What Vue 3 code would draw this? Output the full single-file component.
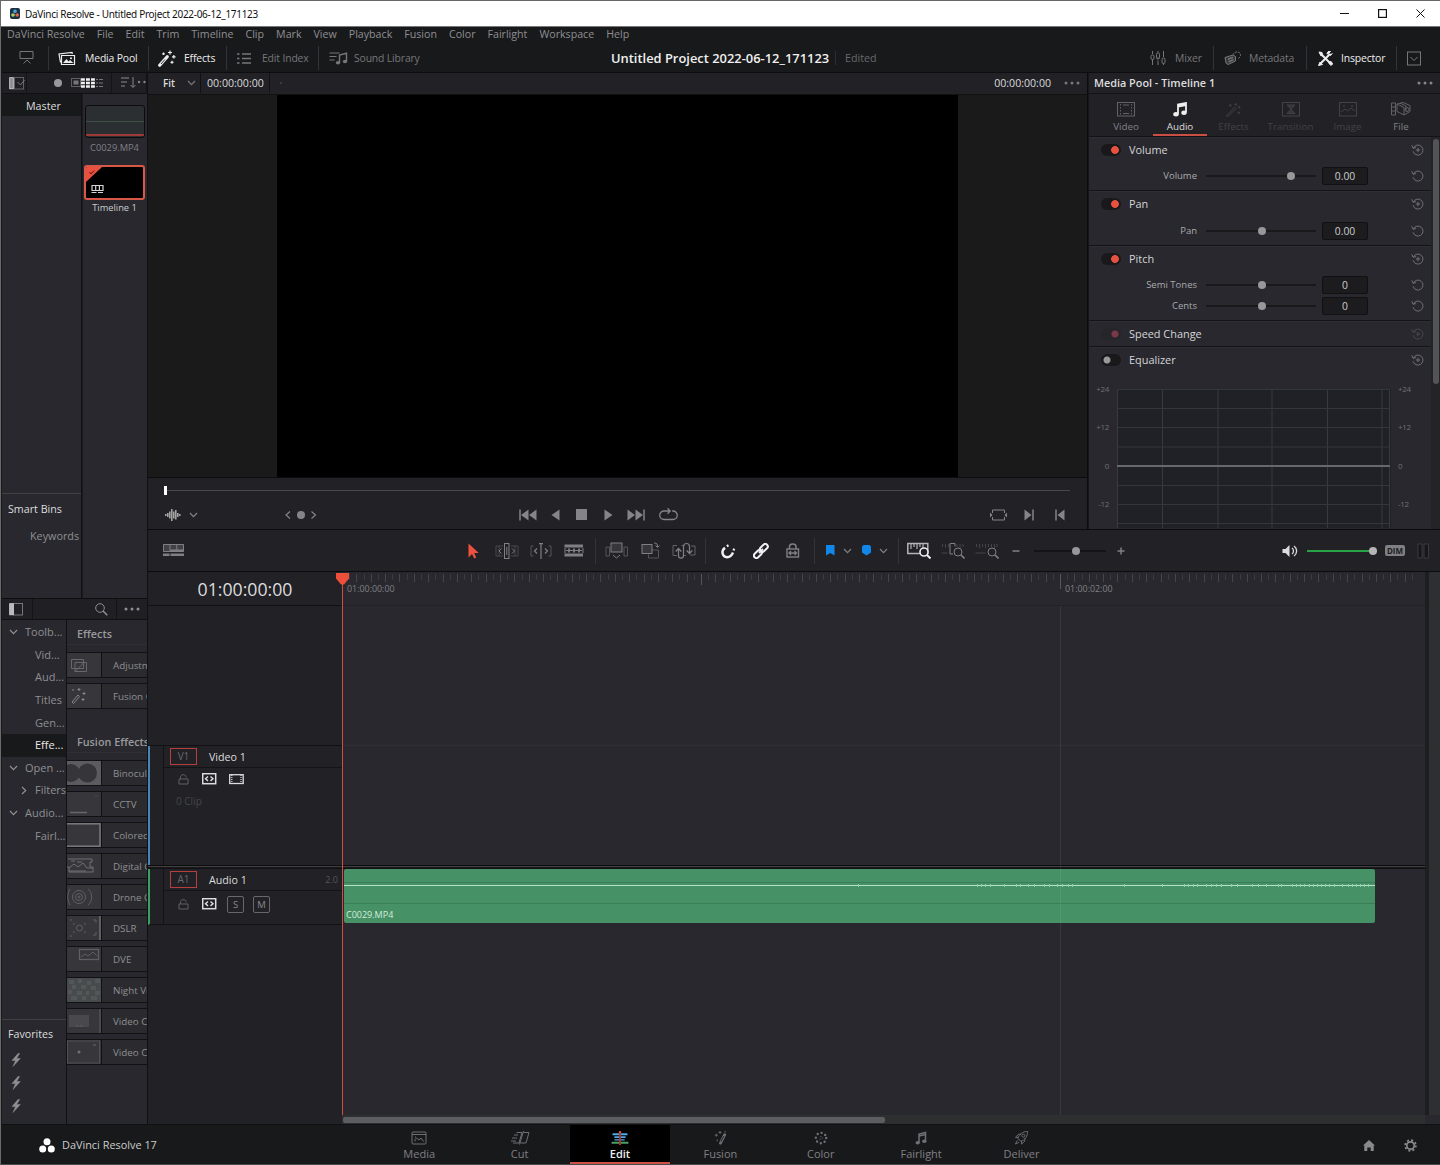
<template>
  <div class="app">
    <header class="titlebar">
      <Icon name="appLogo" class="app-logo" />
      <span class="window-title">DaVinci Resolve - Untitled Project 2022-06-12_171123</span>
      <div class="window-buttons">
        <Icon name="minimize" />
        <Icon name="maximize" />
        <Icon name="close" />
      </div>
    </header>

    <nav class="menubar">
      <span v-for="item in menu" :key="item">{{ item }}</span>
    </nav>

    <div class="toolbar">
      <div class="tool present"><Icon name="present" /></div>
      <div class="tool active pool"><Icon name="mediaPool" /><span>Media Pool</span></div>
      <div class="tool active fx"><Icon name="wand" /><span>Effects</span></div>
      <div class="tool index"><Icon name="list" /><span>Edit Index</span></div>
      <div class="tool sound"><Icon name="sound" /><span>Sound Library</span></div>
      <div class="project">
        <h1>Untitled Project 2022-06-12_171123</h1>
        <span class="edited">Edited</span>
      </div>
      <div class="tool mixer"><Icon name="mixer" /><span>Mixer</span></div>
      <div class="tool metadata"><Icon name="metadata" /><span>Metadata</span></div>
      <div class="tool active inspector-btn"><Icon name="tools" /><span>Inspector</span></div>
      <div class="tool collapse"><Icon name="boxDown" /></div>
    </div>

    <main class="workspace">
      <aside class="sidebar">
        <div class="panel-head">
          <div class="ph-toggle"><Icon name="sidebarDrop" /></div>
          <div class="ph-dot"><i class="dot"></i></div>
          <div class="ph-views"><Icon name="views" /></div>
          <div class="ph-sort"><Icon name="sort" /></div>
        </div>
        <div class="media">
          <div class="bins">
            <div class="bin-master">Master</div>
            <div class="smart-bins">
              <h4>Smart Bins</h4>
              <span>Keywords</span>
            </div>
          </div>
          <div class="clips">
            <div class="thumb audio-thumb"></div>
            <span class="clip-name">C0029.MP4</span>
            <div class="thumb timeline-thumb"><Icon name="thumbTimeline" /></div>
            <span class="clip-name selected">Timeline 1</span>
          </div>
        </div>
        <div class="panel-head fx-head">
          <div class="fx-toggle"><Icon name="sidebar" /></div>
          <div class="fx-search"><Icon name="search" /></div>
          <div class="fx-more"><Icon name="dots" /></div>
        </div>
        <div class="effects">
          <div class="tree">
            <div
              v-for="node in tree"
              :key="node.label"
              class="node"
              :class="{ child: node.child, current: node.current }"
            >
              <Icon v-if="node.icon" :name="node.icon" class="arrow" />
              <span>{{ node.label }}</span>
            </div>
            <div class="favorites">
              <h4>Favorites</h4>
              <Icon v-for="n in 3" :key="n" name="bolt" />
            </div>
          </div>
          <div class="fx-list">
            <template v-for="group in effects" :key="group.title">
              <h5>{{ group.title }}</h5>
              <div v-for="(fx, i) in group.items" :key="i" class="fx-item">
                <div class="fx-icon"><Icon :name="fx.icon" /></div>
                <span>{{ fx.label }}</span>
              </div>
            </template>
          </div>
        </div>
      </aside>

      <section class="content">
        <div class="upper">
          <section class="viewer">
            <div class="viewer-head">
              <div class="fit">Fit <Icon name="chevDown" /></div>
              <div class="tc">00:00:00:00</div>
              <i class="speck"></i>
              <div class="tc-right">00:00:00:00</div>
              <Icon name="dots" class="viewer-more" />
            </div>
            <div class="stage"><div class="frame"></div></div>
            <div class="scrub"><i class="head"></i><i class="line"></i></div>
            <div class="transport">
              <div class="t-left">
                <Icon name="wave" />
                <Icon name="chevDown" class="wave-drop" />
                <Icon name="jog" class="jog" />
              </div>
              <div class="t-mid">
                <Icon name="first" />
                <Icon name="reverse" />
                <Icon name="stop" />
                <Icon name="play" />
                <Icon name="last" />
                <Icon name="loop" />
              </div>
              <div class="t-right">
                <Icon name="matchFrame" />
                <Icon name="nextEdit" />
                <Icon name="prevEdit" />
              </div>
            </div>
          </section>

          <section class="inspector">
            <div class="insp-head">
              <span>Media Pool - Timeline 1</span>
              <Icon name="dots" />
            </div>
            <div class="insp-tabs">
              <div
                v-for="tab in inspectorTabs"
                :key="tab.label"
                class="insp-tab"
                :class="tab.state"
                :style="{ width: tab.width + 'px' }"
              >
                <Icon :name="tab.icon" />
                <span>{{ tab.label }}</span>
              </div>
            </div>
            <div class="insp-body">
              <div class="groups">
                <div v-for="group in groups" :key="group.title" class="group">
                  <div class="group-head">
                    <i class="switch" :class="group.state"></i>
                    <span>{{ group.title }}</span>
                    <Icon name="resetPlus" :class="{ faded: group.state === 'locked' }" />
                  </div>
                  <div v-if="group.params.length" class="params">
                    <div v-for="p in group.params" :key="p.label" class="param">
                      <label>{{ p.label }}</label>
                      <div class="slider"><i :style="{ left: p.pos + '%' }"></i></div>
                      <div class="value">{{ p.value }}</div>
                      <Icon name="reset" />
                    </div>
                  </div>
                </div>
                <div class="eq">
                  <div class="eq-scale left"><span v-for="l in eqLabels" :key="l">{{ l }}</span></div>
                  <svg class="eq-graph" width="274" height="139" viewBox="0 0 274 139">
                    <rect x="0" y="0" width="274" height="139" fill="#202126" />
                    <path d="M.5 0v139M45.500 0v139M101 0v139M155 0v139M210.500 0v139M265 0v139M272.500 0v139" stroke="#383b3e" fill="none" />
                    <path d="M0 .5h273M0 19.500h273M0 38.500h273M0 58h273M0 96.500h273M0 115.500h273M0 134.500h273" stroke="#34373a" fill="none" />
                    <path d="M0 77h273" stroke="#68686c" stroke-width="2" />
                  </svg>
                  <div class="eq-scale right"><span v-for="l in eqLabels" :key="l">{{ l }}</span></div>
                </div>
              </div>
              <div class="insp-scroll"><i></i></div>
            </div>
          </section>
        </div>

        <div class="edit-bar">
          <Icon name="timelineView" class="view-options" />
          <div class="modes">
            <Icon name="arrow" />
            <Icon name="trim" />
            <Icon name="dynTrim" />
            <Icon name="blade" />
          </div>
          <div class="inserts">
            <Icon name="insert" />
            <Icon name="overwrite" />
            <Icon name="replace" />
          </div>
          <div class="links">
            <Icon name="magnet" />
            <Icon name="link" />
            <Icon name="lockPos" />
          </div>
          <div class="marks">
            <Icon name="flag" />
            <Icon name="chevDown" />
            <Icon name="marker" />
            <Icon name="chevDown" />
          </div>
          <div class="zooms">
            <Icon name="zoomFull" />
            <Icon name="zoomDetail" />
            <Icon name="zoomCustom" />
          </div>
          <Icon name="minus" class="zoom-minus" />
          <div class="zoom-slider"><i></i></div>
          <Icon name="plus" class="zoom-plus" />
          <Icon name="speaker" class="speaker" />
          <div class="volume"><i></i></div>
          <div class="dim">DIM</div>
          <Icon name="meters" class="meters" />
        </div>

        <div class="timeline">
          <div class="track-heads">
            <div class="timecode">01:00:00:00</div>
            <div class="head-gap"></div>
            <div class="track-head video">
              <div class="th-top"><b>V1</b><span>Video 1</span></div>
              <div class="th-icons">
                <Icon name="lock" />
                <Icon name="autoSelect" />
                <Icon name="film" />
              </div>
              <div class="clip-count">0 Clip</div>
            </div>
            <div class="split"></div>
            <div class="track-head audio">
              <div class="th-top"><b>A1</b><span>Audio 1</span><em>2.0</em></div>
              <div class="th-icons">
                <Icon name="lock" />
                <Icon name="autoSelect" />
                <i class="sm">S</i>
                <i class="sm">M</i>
              </div>
            </div>
          </div>
          <div class="tracks">
            <div class="ruler">
              <svg width="1083" height="34" viewBox="0 0 1083 34">
                <line
                  v-for="t in ticks"
                  :key="t.x"
                  :x1="t.x"
                  :x2="t.x"
                  y1="2"
                  :y2="t.h"
                  :stroke="t.color"
                />
              </svg>
              <span class="ruler-label start">01:00:00:00</span>
              <span class="ruler-label two">01:00:02:00</span>
            </div>
            <div class="lane empty-lane"></div>
            <div class="lane video-lane"></div>
            <div class="split"></div>
            <div class="lane audio-lane">
              <div class="clip">
                <svg class="waveform" width="1031" height="54" viewBox="0 0 1031 54">
                  <path d="M0 13.500h1031M0 34.500h1031" stroke="#397e58" />
                  <path d="M0 16.500h1031" stroke="#b4e4c5" />
                  <path :d="peaks" stroke="#8fcfa8" />
                </svg>
                <span>C0029.MP4</span>
              </div>
            </div>
            <div class="hscroll"><i></i></div>
            <i class="second-line"></i>
            <div class="playhead"><Icon name="playhead" /></div>
          </div>
          <div class="vscroll"></div>
        </div>
      </section>
    </main>

    <footer class="pages">
      <div class="brand"><Icon name="brand" /><span>DaVinci Resolve 17</span></div>
      <div class="page-tabs">
        <div v-for="page in pages" :key="page.label" class="page" :class="{ active: page.active }">
          <Icon :name="page.icon" />
          <span>{{ page.label }}</span>
        </div>
      </div>
      <div class="footer-actions">
        <Icon name="home" />
        <Icon name="gear" />
      </div>
    </footer>
  </div>
</template>

<script setup>
import { h } from 'vue'

// name: [width, height, svg body]
const icons = {
  appLogo: [10, 11, '<rect width="10" height="11" rx="2" fill="#1d3040" stroke="none"/><circle cx="5" cy="3.300" r="1.800" fill="#4aa3dc" stroke="none"/><circle cx="3" cy="7" r="1.800" fill="#a8cf60" stroke="none"/><circle cx="7.200" cy="7" r="1.800" fill="#e2654a" stroke="none"/>'],
  minimize: [9, 9, '<path d="M0 4.500h9"/>'],
  maximize: [9, 9, '<rect x=".6" y=".6" width="7.800" height="7.800" stroke-width="1.200"/>'],
  close: [9, 9, '<path d="M.5.5l8 8M8.500.5l-8 8"/>'],
  present: [16, 14, '<path d="M1 .5h13v7h-13zM4.500 12.500l3.500-3.500l3.500 3.500"/>'],
  mediaPool: [18, 15, '<path d="M3.500 4.500h13v9h-13zM2.500 11.500l-1.500-8.500l13-1.500l.3 1.500" stroke-width="1.200"/><path d="M5 12l3.500-4l2 2.500l1.500-1.500l3.500 3z" fill="currentColor" stroke="none"/><circle cx="13" cy="7.300" r="1" fill="currentColor" stroke="none"/>'],
  wand: [18, 17, '<path d="M1.700 15.300l7.500-8.500" stroke-width="3.200" stroke-linecap="round"/><path d="M3 14l4-4.600" stroke="#18191b" stroke-width=".9"/><path d="M12 .5v4M10 2.500h4M15.800 5v3.600M14 6.800h3.600M14 10.800v3M12.500 12.300h3M5.500 2.500v2.600M4.200 3.800h2.600" stroke-width="1.200"/>'],
  list: [15, 13, '<path d="M5 2h9M5 6.500h9M5 11h9" stroke-width="1.400"/><path d="M0 2h2.500M0 6.500h2.500M0 11h2.500" stroke-width="1.500"/>'],
  sound: [19, 14, '<path d="M.5 2h10M.5 5.500h7M.5 9h5" stroke-width="1.200"/><path d="M10.500 11.500v-7.500l7-1.800v8" stroke-width="1.400"/><ellipse cx="9" cy="11.800" rx="2.200" ry="1.700" fill="currentColor" stroke="none"/><ellipse cx="16" cy="10.500" rx="2.200" ry="1.700" fill="currentColor" stroke="none"/>'],
  mixer: [16, 15, '<path d="M2.500 0v3M2.500 8v6M8 0v1.500M8 6v2M13.500 0v6M13.500 12v2M8 9.500v4.500"/><rect x="1" y="4" width="3" height="4.500" rx="1.300"/><rect x="6.500" y="2" width="3" height="6" rx="1.300"/><rect x="12" y="7" width="3" height="5.500" rx="1.300"/>'],
  metadata: [18, 15, '<path d="M1 6.500l8-2.500l2.500 1.500v4.500l-7.500 3.500l-2-1.500z" fill="currentColor" fill-opacity=".35"/><path d="M4 8.300l5-2M4.500 10.800l5-2.200" stroke-width="1.300"/><path d="M9 3.500c2-4 8-3 7.500 1c-.3 2-2 3-3 3" stroke-dasharray="2 1"/>'],
  tools: [15, 15, '<path d="M3 3l9.500 9.500M12 3l-9 9" stroke-width="2"/><path d="M1 1l3 .5l.5 2.500l-1.500 1zM14.500 2.500l-2 2l-2-2l2-2.300c-2-.5-3.500 1-3.500 3M.5 14.500l1.500-3.500l2.500 2.500zM10.500 12l2-2l2.300 2.800l-1.700 1.700z" fill="currentColor"/>'],
  boxDown: [15, 15, '<rect x=".5" y="1" width="13" height="13"/><path d="M3.500 6l3.500 3.500l3.500-3.500"/>'],
  sidebarDrop: [17, 13, '<rect x="5.500" y=".5" width="9" height="11.500" stroke="#616165"/><path d="M8.500 5l3 3l4-5" stroke="#77777b"/><rect x=".7" y=".7" width="3.600" height="11" fill="#8b8b8e" stroke="#c8c8ca"/>'],
  sidebar: [14, 13, '<rect x="4.500" y=".5" width="9" height="11.500" stroke="#77777b"/><rect x=".7" y=".7" width="3.600" height="11" fill="#b8b8ba" stroke="#c8c8ca"/>'],
  views: [34, 10, '<rect x=".5" y=".5" width="9" height="8" stroke="#606064"/><rect x="2.500" y="2.500" width="5" height="4" fill="#77777b" stroke="none"/><path d="M10 1.500h14M10 5h14M10 8.500h14" stroke="#f0f0f0" stroke-width="2.400" stroke-dasharray="3.900 1.100"/><path d="M25 1.500h7M25 5h7M25 8.500h7" stroke="#77777b" stroke-dasharray="2 1 5 1"/>'],
  sort: [25, 12, '<path d="M0 1h8M0 5h6M0 9h4" stroke="#68686c" stroke-width="1.300"/><path d="M12 0v10M9.500 8l2.500 2.500l2.500-2.500" stroke="#85858a"/><circle cx="18" cy="5" r="1.200" fill="#85858a" stroke="none"/><circle cx="23.500" cy="5" r="1.200" fill="#85858a" stroke="none"/>'],
  thumbTimeline: [58, 32, '<path d="M0 0h16l-16 15z" fill="#e9503f" stroke="none"/><path d="M3.500 5l1.500 2l3-3.500" stroke="#5c1712"/><path d="M6 18.500h11v5h-11zM9.700 19v4.500M13.400 19v4.500M5.500 25.500h5M12 25.500h5" stroke="#d5d5d5" stroke-width="1.200"/>'],
  search: [13, 13, '<circle cx="5" cy="5" r="4.300"/><path d="M8 8l4.300 4.300" stroke-width="1.500"/>'],
  dots: [16, 4, '<g fill="currentColor" stroke="none"><circle cx="2" cy="2" r="1.500"/><circle cx="8" cy="2" r="1.500"/><circle cx="14" cy="2" r="1.500"/></g>'],
  chevDown: [9, 6, '<path d="M1 1l3.500 3.700l3.500-3.700" stroke-width="1.200"/>'],
  chevRight: [6, 9, '<path d="M1 1l3.700 3.500l-3.700 3.500" stroke-width="1.200"/>'],
  bolt: [10, 14, '<path d="M7 .5l-6 7h3.500l-2.500 6l7.300-8h-3.700l3-5z" fill="currentColor" stroke="currentColor" stroke-width=".5"/>'],
  wave: [16, 12, '<path d="M.8 5v2M2.800 4v4M4.800 2.500v7M6.800 0v12M8.800 2.500v7M10.800 1v9.500M12.800 4v4M14.800 5v2" stroke-width="1.500"/>'],
  jog: [34, 10, '<path d="M6 1.500l-4 3.500l4 3.500M27.500 1.500l4 3.500l-4 3.500" stroke-width="1.200"/><circle cx="17" cy="5" r="4" fill="currentColor" stroke="none"/>'],
  first: [18, 12, '<path d="M1 .5v11" stroke-width="1.500"/><path d="M9.500.5v11l-7.500-5.500zM17.500.5v11l-7.500-5.500z" fill="currentColor" stroke="none"/>'],
  last: [18, 12, '<path d="M17 .5v11" stroke-width="1.500"/><path d="M.5.5v11l7.500-5.500zM8.500.5v11l7.500-5.500z" fill="currentColor" stroke="none"/>'],
  reverse: [9, 12, '<path d="M8.500.5v11l-8-5.500z" fill="currentColor" stroke="none"/>'],
  play: [9, 12, '<path d="M.5.500v11l8-5.500z" fill="currentColor" stroke="none"/>'],
  stop: [11, 11, '<rect width="11" height="11" fill="currentColor" stroke="none"/>'],
  loop: [19, 13, '<path d="M6.500 3h-1.500a4.200 4.200 0 0 0 0 8.500h9a4.200 4.200 0 0 0 0-8.500h-.8M5.500 3h5.500M8.500.3l2.700 2.700l-2.700 2.700" stroke-width="1.300"/>'],
  matchFrame: [17, 12, '<path d="M2.500 4v-3h12v3M2.500 8v3h12v-3"/><path d="M0 3.500l2.500 2.500l-2.500 2.500zM17 3.500l-2.500 2.500l2.500 2.500z" fill="currentColor" stroke="none"/>'],
  nextEdit: [10, 12, '<path d="M.5.5v11l7-5.500z" fill="currentColor" stroke="none"/><path d="M9 .5v11" stroke-width="1.500"/>'],
  prevEdit: [10, 12, '<path d="M9.500.5v11l-7-5.500z" fill="currentColor" stroke="none"/><path d="M1 .5v11" stroke-width="1.500"/>'],
  videoTab: [18, 15, '<rect x=".5" y=".5" width="17" height="13.500"/><path d="M3.500 2v11M14.500 2v11" stroke-dasharray="1.500 1.500"/><path d="M6 3h6M6 11.500h6"/>'],
  note: [14, 15, '<path d="M5 12v-9.500l8-1.500v9.500M5 4.500l8-1.500" stroke-width="1.800"/><ellipse cx="3" cy="12.300" rx="2.700" ry="2.200" fill="currentColor" stroke="none"/><ellipse cx="11" cy="10.700" rx="2.700" ry="2.200" fill="currentColor" stroke="none"/>'],
  wandTab: [18, 16, '<path d="M1 15l8.500-9.500l1.500 1.500l-8.500 8.500z"/><path d="M11 1v3M9.500 2.500h3M14.500 4v3M13 5.500h3M14 10v3M12.500 11.500h3M5 2v3M3.500 3.500h3"/>'],
  transition: [18, 15, '<rect x=".5" y=".5" width="17" height="13.500"/><path d="M5 3h8l-8 8.500h8z" fill="currentColor" fill-opacity=".6"/>'],
  image: [18, 15, '<rect x=".5" y=".5" width="17" height="13.500"/><path d="M2 10l4-3l3 2l3-3l4 3M12 4h2M4 4h2"/>'],
  fileTab: [20, 15, '<path d="M.5 1h4v12h-4zM.5 5h4M.5 9h4M6 2l6-1.500l7 3v6l-6 3.500l-7-3.500zM6 2l7 3.500v7.500M9 1l6 3v5"/><circle cx="16" cy="7.500" r="2"/>'],
  resetPlus: [13, 12, '<path d="M2.400 4a5 5 0 1 1-.3 3.300M.8 1.300l1.300 3l3-.8M7 3.800v4.400M4.800 6h4.400"/>'],
  reset: [13, 12, '<path d="M2.400 4a5 5 0 1 1-.3 3.300M.8 1.300l1.300 3l3-.8"/>'],
  timelineView: [21, 13, '<rect x="0" y="0" width="21" height="8" fill="currentColor" fill-opacity=".35" stroke="none"/><path d="M.5.500h20v7h-20zM7 .500v7M13.800.500v7"/><path d="M7.500 6.500h13" stroke-width="2"/><path d="M0 10.800h6.500M7.500 10.800h13.500" stroke-width="2.600"/>'],
  arrow: [11, 16, '<path d="M.5.5v14l3.500-3.500l2.300 4.500l2-1l-2.200-4.500h4.700z" fill="#f0503f" stroke="none"/>'],
  trim: [24, 16, '<path d="M8 3h-7v10h7M16 3h7v10h-7M4 3v10M20 3v10" stroke="#48484d"/><rect x="9.500" y=".5" width="4.500" height="15" /><path d="M11.800 4v8M6.500 5.500l-2.500 2.500l2.500 2.500M17 5.500l2.500 2.500l-2.500 2.500"/>'],
  dynTrim: [22, 16, '<path d="M3.500 3h-2.500v10h2.500M18.500 3h2.500v10h-2.500" stroke="#55555a"/><path d="M11 1v15M9 .7h4M7 5.500l-2.500 2.500l2.500 2.500M15 5.500l2.500 2.500l-2.500 2.500" stroke-width="1.200"/>'],
  blade: [20, 13, '<path d="M.5 2h18.500M.5 11h18.500" stroke-width="3"/><path d="M1 4v5M19 4v5M2 6.500h16" /><path d="M5 4.500v4M10 4.500v4M15 4.500v4" stroke-width="1.800"/>'],
  insert: [24, 17, '<path d="M1 5h3.500v9h-3.500zM19 5h3.500v9h-3.500z" stroke="#55555a"/><rect x="6" y="1" width="11" height="9" fill="#36363b"/><path d="M8 13l3.500 3l3.500-3"/>'],
  overwrite: [19, 18, '<path d="M11 8h6.500v8h-10v-3.500" stroke="#55555a"/><rect x="1" y="2.500" width="10" height="9" fill="#36363b"/><path d="M13 1c3 0 3.500 1 3.500 4M14.500 3.500l2 2l2-2"/>'],
  replace: [24, 18, '<path d="M5 3.500h-4v10h4M9.500 3.500h3M19 4h4v9h-5M11 13.500h3" stroke="#626267"/><path d="M6.500 7v6.500c0 3.500 5 3.500 5 0v-9c0-4 6-4 6 0v6.500M3.700 9.500l2.800-3l2.800 3M14.700 8.500l2.800 3l2.800-3" stroke-width="1.200"/>'],
  magnet: [16, 16, '<path d="M5 4.800c-4.500 3.500-2.500 9.400 2 9.400c3.200 0 5-2.200 6-4.700" stroke-width="2.400"/><path d="M6.800 3.300l1.700-1M13.600 7.500l.5-1.900" stroke-width="2.200"/>'],
  link: [16, 16, '<g stroke-width="2"><rect x="6.500" y="2.300" width="9" height="5" rx="2.500" transform="rotate(-45 11 5)"/><rect x=".3" y="8.500" width="9" height="5" rx="2.500" transform="rotate(-45 5 11)"/></g><path d="M6 10l4-4" stroke-width="1.800"/>'],
  lockPos: [14, 15, '<path d="M3.500 6v-2.500c0-3.500 6.500-3.500 6.500 0v2.500" stroke-width="1.500"/><rect x="1" y="6" width="11.500" height="8" stroke-width="1.400"/><path d="M3 10h7.500M5 8l-2 2l2 2M8.500 8l2 2l-2 2" stroke-width="1.300"/>'],
  flag: [9, 11, '<path d="M0 0h8.500v10.500l-4.200-2.500l-4.300 2.500z" fill="#1287ea" stroke="none"/>'],
  marker: [9, 11, '<path d="M1.500 0h6l1.500 1.500v6l-4.500 3l-4.500-3v-6z" fill="#1287ea" stroke="none"/>'],
  zoomFull: [24, 17, '<rect x=".8" y="1.500" width="20" height="10" stroke-width="1.500"/><path d="M4 2v5M7 2v3M10 2v5M13 2v3M16 2v4" stroke-width="1.200"/><circle cx="17" cy="10" r="4" fill="#212126" stroke="#ededed" stroke-width="1.600"/><path d="M20 13l3.500 3.500" stroke="#ededed" stroke-width="2"/>'],
  zoomDetail: [24, 17, '<path d="M.5 11h6M1.500 2v3M4.500 2v4M7.500 2v3M16 2v3M19 2v4M22 2v3" stroke="#44444a"/><path d="M12 12h-3v-10.500h5v3"/><circle cx="17" cy="10" r="4" fill="#212126"/><path d="M20 13l3.500 3.500" stroke-width="1.600"/>'],
  zoomCustom: [24, 17, '<path d="M.5 11h10M1.500 2v3M4.500 2v4M7.500 2v3M10.500 2v4M13.500 2v3M16.500 2v3M19.500 2v4M22 2v3" stroke="#44444a"/><circle cx="17" cy="10" r="4" fill="#212126"/><path d="M20 13l3.500 3.500" stroke-width="1.600"/>'],
  minus: [8, 8, '<path d="M.5 4h7" stroke-width="1.500"/>'],
  plus: [8, 8, '<path d="M.5 4h7M4 .5v7" stroke-width="1.500"/>'],
  speaker: [16, 14, '<path d="M.5 5h3l4-4v12l-4-4h-3z" fill="currentColor" stroke="none"/><path d="M10 4c2 1.500 2 4.500 0 6M12 2c3.500 2.500 3.500 7.500 0 10" stroke-width="1.300"/>'],
  meters: [13, 16, '<path d="M1 1h4v14h-4zM7 1h4.500v14h-4.500z" fill="#17171a" stroke="#3a3a3f"/>'],
  lock: [11, 11, '<path d="M1 5h9v5h-9zM2.500 5v-2c0-3 5.500-3 5.500-.5v1"/>'],
  autoSelect: [15, 12, '<rect x=".7" y=".7" width="13" height="10" stroke-width="1.500"/><path d="M6 3.500l-2.500 2.200l2.500 2.200M8.500 3.500l2.500 2.200l-2.500 2.200" stroke-width="1.400"/>'],
  film: [15, 11, '<rect x=".7" y=".7" width="13.500" height="8.800" stroke-width="1.300"/><path d="M2.800 1v9M12 1v9" stroke-dasharray="1 1" stroke-width="1.200"/>'],
  playhead: [13, 12, '<path d="M0 0h13v5.500l-5 6h-3l-5-6z" fill="#ee4f3b" stroke="none"/>'],
  adjust: [34, 24, '<path d="M4.500 6.500h12v9h-12zM8 9.500h11.500v9h-11.500zM8 18.500l9-9" stroke="#68686c"/>'],
  fxWand: [34, 24, '<path d="M5 18l6-7l1.500 1.500l-6 7zM12 4v3M10.500 5.500h3M17 8v3M15.500 9.500h3M16 14v3M14.500 15.500h3M6 5v2" stroke="#85858a"/>'],
  binoculars: [34, 24, '<rect width="34" height="24" fill="#5c5c60" stroke="none"/><circle cx="4" cy="12" r="9" fill="#35353a" stroke="none"/><circle cx="20.500" cy="12" r="9.500" fill="#35353a" stroke="none"/><path d="M4 8h16v9h-16z" fill="#35353a" stroke="none"/>'],
  cctv: [34, 24, '<path d="M3 20.500h17" stroke="#68686c" stroke-width="1.500"/><path d="M28 4h3" stroke="#48484d"/>'],
  border: [34, 24, '<rect x="-1" y=".8" width="34" height="22.400" stroke="#77777b" stroke-width="1.600"/>'],
  glitch: [34, 24, '<path d="M1 5h24v3h-2v5h3v5h-24v-5h-2M2 14l5-4l4 3l5-4l4 5h6M10 8h5M2 17h17M4 7h4" stroke="#707074"/>'],
  drone: [34, 24, '<circle cx="12" cy="12" r="6.500"/><circle cx="12" cy="12" r="3.500"/><circle cx="12" cy="12" r="1"/><path d="M3 4c-3 5-3 11 0 16M21 4c5 4 5 12 0 16"/>'],
  dslr: [34, 24, '<circle cx="12.500" cy="12" r="3"/><path d="M6 8h2M6 16h2M17 8h2M17 16h2M26 4h3v3M29 16v3h-3M3 4h2M3 20h2"/><path d="M33 0v24" stroke-width="2"/>'],
  dve: [34, 24, '<rect x="12.500" y="2.500" width="19" height="10" stroke-width="1.300"/><path d="M14 10l4-3l3 2l5-4l4 4" />'],
  night: [34, 24, '<rect width="34" height="24" fill="#484b4c" stroke="none"/><path d="M2 4h5M11 3h4M20 5h4M28 3h5M5 9h4M14 9h5M24 10h5M1 14h4M10 15h5M19 15h3M28 15h5M4 20h6M15 20h4M24 20h6" stroke="#545758" stroke-width="4"/>'],
  camera: [34, 24, '<rect x="2" y="6" width="20" height="12" fill="#48484d" stroke="none"/><path d="M9 17h8" stroke="#65656a" stroke-dasharray="1 1"/><path d="M33 0v24"/>'],
  call: [34, 24, '<rect x=".5" y="1" width="32" height="22" stroke="#505055"/><circle cx="12" cy="12" r="1.500" fill="#707074" stroke="none"/><path d="M26 5h3" stroke="#68686c"/>'],
  brand: [16, 15, '<g fill="#fff" stroke="none"><circle cx="8" cy="3.800" r="3.500"/><circle cx="3.700" cy="11" r="3.500"/><circle cx="12.300" cy="11" r="3.500"/></g>'],
  pMedia: [16, 14, '<rect x="1" y="1" width="14" height="12" rx="1"/><path d="M1 3.500h14M4 10.500v-2l1.500-1.500l2.500 2l2-2l2.500 3.500M4 6h1"/>'],
  pCut: [20, 14, '<path d="M6.500 1.500h5.500l-3 10.500h-6M4 4h4M2 7h5M1 10h5M13.500 1.500h5.500l-3 10.500h-5.500M9.500 13.500l4-13.500"/>'],
  pEdit: [18, 15, '<path d="M1 3.500h7M3 6.500h5M10 3.500h7M10 6.500h5" stroke="#4da8e8" stroke-width="2"/><path d="M3 9.500h5M10 9.500h4" stroke="#4da8e8" stroke-width="1.500"/><path d="M0 12.500h8M10 12.500h8" stroke="#4ba064" stroke-width="2.200"/><path d="M9 0v15" stroke="#ed4e3c" stroke-width="1.500"/><circle cx="9" cy="1" r="1.300" fill="#ed4e3c" stroke="none"/>'],
  pFusion: [15, 15, '<path d="M7.500 13l4.500-9" stroke-width="3" stroke-linecap="round"/><path d="M8 11.500l3-6" stroke="#1a1b1d" stroke-width="1"/><path d="M7 0v3M5.500 1.500h3M3 3v3M1.500 4.500h3M12.500 0v1.500M4 9v2"/>'],
  pColor: [14, 14, '<circle cx="7" cy="7" r="5.200" stroke-width="2.400" stroke-dasharray="0 4.080" stroke-linecap="round"/><circle cx="7" cy="7" r="1.400" stroke-width="1.200" stroke-dasharray="0 2.900" stroke-linecap="round"/>'],
  pNote: [12, 14, '<path d="M4 11.500v-8.500l6.500-1.500v8.500M4 5l6.500-1.500" stroke-width="1.500"/><ellipse cx="2.700" cy="11.800" rx="2.200" ry="1.800" fill="currentColor" stroke="none"/><ellipse cx="9.300" cy="10.300" rx="2.200" ry="1.800" fill="currentColor" stroke="none"/>'],
  pRocket: [15, 15, '<path d="M3.500 8c1-4 5-7.500 10.500-7.500c0 5.500-3 9.500-7 10.500zM4 7h-3l3-3.500h3M7.500 10.500v3.500l3.500-3v-3M3 10l-2 4l4-2"/><circle cx="9.500" cy="5" r="1.600"/>'],
  home: [12, 11, '<path d="M6 0l6 5.500h-1.300v5.500h-3v-3.500h-3.400v3.500h-3v-5.500h-1.300z" fill="currentColor" stroke="none"/>'],
  gear: [13, 13, '<circle cx="6.500" cy="6.500" r="3.700" stroke-width="1.700"/><circle cx="6.500" cy="6.500" r="5.300" stroke-width="1.800" stroke-dasharray="2 2.160"/>'],
}

const Icon = (props) => {
  const [w, ht, body] = icons[props.name]
  return h('svg', {
    width: w,
    height: ht,
    viewBox: `0 0 ${w} ${ht}`,
    fill: 'none',
    stroke: 'currentColor',
    innerHTML: body,
  })
}
Icon.props = ['name']

const menu = ['DaVinci Resolve', 'File', 'Edit', 'Trim', 'Timeline', 'Clip', 'Mark', 'View', 'Playback', 'Fusion', 'Color', 'Fairlight', 'Workspace', 'Help']

const tree = [
  { label: 'Toolb...', icon: 'chevDown' },
  { label: 'Vid...', child: true },
  { label: 'Aud...', child: true },
  { label: 'Titles', child: true },
  { label: 'Gen...', child: true },
  { label: 'Effe...', child: true, current: true },
  { label: 'Open ...', icon: 'chevDown' },
  { label: 'Filters', child: true, icon: 'chevRight' },
  { label: 'Audio...', icon: 'chevDown' },
  { label: 'Fairl...', child: true },
]

const effects = [
  {
    title: 'Effects',
    items: [
      { label: 'Adjustm', icon: 'adjust' },
      { label: 'Fusion C', icon: 'fxWand' },
    ],
  },
  {
    title: 'Fusion Effects',
    items: [
      { label: 'Binocul', icon: 'binoculars' },
      { label: 'CCTV', icon: 'cctv' },
      { label: 'Colored', icon: 'border' },
      { label: 'Digital G', icon: 'glitch' },
      { label: 'Drone O', icon: 'drone' },
      { label: 'DSLR', icon: 'dslr' },
      { label: 'DVE', icon: 'dve' },
      { label: 'Night Vi', icon: 'night' },
      { label: 'Video C', icon: 'camera' },
      { label: 'Video C', icon: 'call' },
    ],
  },
]

const inspectorTabs = [
  { label: 'Video', icon: 'videoTab', width: 54 },
  { label: 'Audio', icon: 'note', width: 54, state: 'active' },
  { label: 'Effects', icon: 'wandTab', width: 53, state: 'disabled' },
  { label: 'Transition', icon: 'transition', width: 61, state: 'disabled' },
  { label: 'Image', icon: 'image', width: 53, state: 'disabled' },
  { label: 'File', icon: 'fileTab', width: 54 },
]

const groups = [
  { title: 'Volume', state: 'on', params: [{ label: 'Volume', value: '0.00', pos: 77 }] },
  { title: 'Pan', state: 'on', params: [{ label: 'Pan', value: '0.00', pos: 50.5 }] },
  {
    title: 'Pitch',
    state: 'on',
    params: [
      { label: 'Semi Tones', value: '0', pos: 50.5 },
      { label: 'Cents', value: '0', pos: 50.5 },
    ],
  },
  { title: 'Speed Change', state: 'locked', params: [] },
  { title: 'Equalizer', state: 'off', params: [] },
]

const eqLabels = ['+24', '+12', '0', '-12']

const pages = [
  { label: 'Media', icon: 'pMedia' },
  { label: 'Cut', icon: 'pCut' },
  { label: 'Edit', icon: 'pEdit', active: true },
  { label: 'Fusion', icon: 'pFusion' },
  { label: 'Color', icon: 'pColor' },
  { label: 'Fairlight', icon: 'pNote' },
  { label: 'Deliver', icon: 'pRocket' },
]

// half-frame ticks, 25 frames per second
const ticks = Array.from({ length: 150 }, (_, i) => {
  const x = Math.round(i * 7.18) + 0.5
  if (i % 100 === 0) return { x, h: 17, color: '#55555a' }
  if (i % 50 === 0) return { x, h: 13, color: '#55555a' }
  return { x, h: i % 2 ? 8 : 10, color: i % 2 ? '#3a3a40' : '#45454a' }
})

const peaks = [514, 633, 637, 641, 646, 660, 672, 676, 684, 690, 700, 705, 713, 718, 724, 728, 780, 818, 840, 844, 849, 853, 862, 867, 872, 877, 887, 893, 908, 914, 922, 934, 937, 948, 952, 956, 960, 965, 969, 973, 977, 981, 985, 990, 998, 1004, 1008, 1012, 1016, 1020, 1024]
  .map((x) => `M${x + 0.5} 15v3`)
  .join('')
</script>

<style>
body {
  background: #18191b;
  overflow: hidden;
}
</style>

<style scoped>
* {
  box-sizing: border-box;
}

.app {
  width: 1440px;
  height: 1165px;
  padding-left: 1px;
  border-left: 1px solid #6b6b6b;
  border-top: 1px solid #666;
  border-bottom: 1px solid #4a4a4a;
  background: #18191b;
  color: #8f8f92;
  font-family: 'Open Sans', 'Noto Sans', sans-serif;
  font-size: 11px;
  line-height: 14px;
  display: flex;
  flex-direction: column;
  overflow: hidden;
  white-space: nowrap;
}

svg {
  display: block;
  flex: none;
}

h1, h4, h5 {
  margin: 0;
}

i, em {
  font-style: normal;
}

/* Window chrome */
.titlebar {
  height: 26px;
  margin-left: -1px;
  flex: none;
  background: #fff;
  border-bottom: 1px solid #777;
  color: #111;
  font-family: 'Noto Sans', sans-serif;
  font-size: 10px;
  display: flex;
  align-items: center;
  padding: 0 15px 0 9px;
}

.app-logo { margin-right: 5px; }
.window-title { letter-spacing: -0.3px; }

.window-buttons {
  margin-left: auto;
  display: flex;
  gap: 29px;
}

.menubar {
  height: 17px;
  flex: none;
  padding: 0 5px 3px;
  display: flex;
  gap: 12px;
  align-items: center;
  font-size: 10.650px;
}

.toolbar {
  height: 28px;
  flex: none;
  display: flex;
  align-items: center;
}

.tool {
  height: 24px;
  display: flex;
  align-items: center;
  border-right: 1px solid #333437;
  color: #77777a;
  font-size: 10.400px;
  letter-spacing: -0.15px;
}

.tool.active { color: #eee; }
.present { width: 47px; padding-left: 17px; }
.pool { width: 100px; padding-left: 9px; gap: 9px; }
.fx { width: 78px; padding-left: 9px; gap: 8px; }
.index { width: 92px; padding-left: 10px; gap: 10px; }
.sound { width: 292px; padding-left: 10px; gap: 6px; border: 0; }

.project {
  width: 539px;
  display: flex;
  align-items: center;
}

.project h1 {
  width: 225px;
  font-size: 12.900px;
  font-weight: 600;
  color: #f0f0f0;
  border-right: 1px solid #2d2e30;
}

.edited { padding-left: 9px; color: #68686b; font-size: 10.700px; }
.mixer { width: 64px; padding-left: 0; gap: 9px; }
.metadata { width: 93px; padding-left: 10px; gap: 7px; }
.inspector-btn { width: 90px; padding-left: 11px; gap: 8px; }
.collapse { padding-left: 10px; border: 0; }

/* Sidebar */
.workspace {
  height: 1052px;
  flex: none;
  display: flex;
}

.sidebar {
  width: 146px;
  flex: none;
  display: flex;
  flex-direction: column;
  background: #28282e;
  border-right: 1px solid #111113;
  overflow: hidden;
}

.panel-head {
  height: 22px;
  flex: none;
  display: flex;
  align-items: stretch;
  background: #202024;
  border-top: 1px solid #0e0e10;
  border-bottom: 1px solid #111113;
}

.panel-head > div {
  display: flex;
  align-items: center;
  border-right: 1px solid #141416;
}

.ph-toggle { width: 25px; padding-left: 7px; }
.panel-head .ph-dot { width: 36px; padding-left: 27px; border: 0; }
.ph-views { width: 52px; padding-left: 9px; }
.ph-sort { padding-left: 9px; }

.dot {
  width: 8px;
  height: 8px;
  border-radius: 50%;
  background: #99999b;
}

.media {
  height: 504px;
  flex: none;
  display: flex;
}

.bins {
  width: 80px;
  display: flex;
  flex-direction: column;
  border-right: 1px solid #111113;
}

.bin-master {
  height: 22px;
  padding-left: 24px;
  line-height: 24px;
  background: #18191b;
  color: #ddd;
  font-size: 10.700px;
}

.smart-bins {
  margin-top: auto;
  height: 105px;
  border-top: 1px solid #414145;
  padding: 8px 0 0 6px;
}

.smart-bins h4,
.favorites h4 {
  font-size: 10.700px;
  font-weight: 400;
  color: #ddd;
}

.smart-bins span {
  display: block;
  margin-top: 13px;
  padding-left: 22px;
  font-size: 10.800px;
}

.clips {
  flex: 1;
  border-left: 1px solid #1b1b1e;
  display: flex;
  flex-direction: column;
  align-items: center;
  padding: 11px 1px 0 0;
}

.thumb {
  width: 60px;
  border-radius: 3px;
  overflow: hidden;
  flex: none;
}

.audio-thumb {
  height: 33px;
  border: 1px solid #0c0c0d;
  background: linear-gradient(#2b2f31 15px, #3d4f46 15px, #3d4f46 16px, #2b2f31 16px, #2b2f31 28px, #9b3a36 28px, #9b3a36 30px, #2b2f31 30px);
}

.timeline-thumb {
  width: 61px;
  height: 35px;
  border: 2px solid #d95747;
  background: #000;
}

.clip-name {
  font-size: 9.300px;
  line-height: 14px;
  padding: 3px 0 10px;
  color: #808084;
}

.clip-name.selected { padding-top: 1px; color: #ccc; }

.fx-toggle { width: 31px; padding-left: 7px; }
.fx-search { width: 84px; justify-content: flex-end; padding-right: 8px; }
.fx-more { flex: 1; padding-left: 7px; border: 0 !important; }

.effects {
  flex: 1;
  display: flex;
  min-height: 0;
}

.tree {
  width: 65px;
  flex: none;
  display: flex;
  flex-direction: column;
  padding-top: 1px;
  border-right: 1px solid #111113;
  overflow: hidden;
}

.node {
  height: 22.600px;
  flex: none;
  display: flex;
  align-items: center;
  padding-left: 7px;
}

.node .arrow { margin-right: 7px; }
.node span { margin-left: auto; width: 41px; }
.node.child span { width: 31px; }
.node.child .arrow { margin: 0 0 0 12px; }

.node.current {
  background: #18191b;
  color: #e8e8e8;
}

.favorites {
  margin-top: auto;
  height: 105px;
  border-top: 1px solid #414145;
  padding: 7px 6px 0;
}

.favorites svg { margin: 12px 0 -3px 3px; }
.favorites h4 + svg { margin-top: 12px; }

.fx-list {
  flex: 1;
  overflow: hidden;
}

.fx-list h5 {
  height: 20px;
  margin: 5px 0 7px;
  padding: 2px 0 0 10px;
  font-size: 10.800px;
  font-weight: 600;
  color: #9a9a9d;
  border-bottom: 1px solid #2f2f34;
}

.fx-item + h5 { margin-top: 24px; }

.fx-item {
  height: 26px;
  margin-bottom: 5px;
  display: flex;
  align-items: center;
  border: solid #111113;
  border-width: 1px 0;
  background: #2a2a2f;
  font-size: 9.800px;
}

.fx-icon {
  width: 35px;
  height: 24px;
  flex: none;
  background: #36363b;
  border-right: 1px solid #111113;
  overflow: hidden;
  color: #606064;
}

.fx-item span { padding: 1px 0 0 11px; }

/* Viewer */
.content {
  flex: 1;
  min-width: 0;
  display: flex;
  flex-direction: column;
}

.upper {
  height: 457px;
  flex: none;
  display: flex;
  border-top: 1px solid #0e0e10;
}

.viewer {
  width: 940px;
  flex: none;
  display: flex;
  flex-direction: column;
  border-right: 1px solid #0c0c0e;
  background: #212126;
}

.viewer-head {
  height: 21px;
  flex: none;
  display: flex;
  align-items: center;
  color: #ddd;
  font-size: 10.600px;
  padding-bottom: 1px;
}

.fit {
  width: 53px;
  height: 20px;
  padding: 0 4px 0 15px;
  display: flex;
  align-items: center;
  justify-content: space-between;
  font-weight: 600;
  font-size: 10px;
  border-right: 1px solid #111113;
}

.fit svg { color: #77777b; }

.tc {
  width: 69px;
  height: 20px;
  line-height: 20px;
  padding-left: 6px;
  border-right: 1px solid #111113;
}

.speck {
  width: 2px;
  height: 2px;
  margin-left: 10px;
  background: #38383d;
}

.tc-right { margin-left: auto; }
.viewer-more { margin: 0 7px 0 13px; color: #77777b; }

.stage {
  height: 384px;
  flex: none;
  background: #1a1a1b;
  border-top: 1px solid #111113;
  border-bottom: 1px solid #0c0c0e;
  padding-left: 129px;
}

.frame {
  width: 681px;
  height: 382px;
  background: #000;
}

.scrub {
  height: 24px;
  padding: 0 17px 0 16px;
  display: flex;
  align-items: center;
}

.scrub .head { width: 3px; height: 9px; background: #fff; }
.scrub .line { flex: 1; height: 1px; background: #48484c; }

.transport {
  flex: 1;
  display: flex;
  align-items: center;
  padding-bottom: 2px;
  color: #858588;
}

.t-left, .t-mid, .t-right { display: flex; align-items: center; }
.t-left { width: 371px; padding-left: 17px; }
.t-left svg:first-child { color: #aaa; }
.wave-drop { margin-left: 8px; }
.jog { margin-left: 86px; }
.t-mid { width: 471px; }
.t-mid svg:nth-child(2) { margin-left: 14px; }
.t-mid svg:nth-child(3) { margin-left: 16px; }
.t-mid svg:nth-child(4) { margin-left: 17px; }
.t-mid svg:nth-child(5) { margin-left: 14px; }
.t-mid svg:nth-child(6) { margin-left: 14px; }
.t-right svg:nth-child(2) { margin-left: 17px; }
.t-right svg:nth-child(3) { margin-left: 21px; }

/* Inspector */
.inspector {
  flex: 1;
  background: #28282e;
  display: flex;
  flex-direction: column;
  overflow: hidden;
  border-left: 1px solid #17171a;
}

.insp-head {
  height: 21px;
  flex: none;
  display: flex;
  align-items: center;
  justify-content: space-between;
  padding: 0 7px 0 5px;
  background: #212126;
  border-bottom: 1px solid #131315;
  font-size: 10.850px;
  font-weight: 600;
  color: #ddd;
}

.insp-head svg { color: #85858a; }

.insp-tabs {
  height: 43px;
  flex: none;
  display: flex;
  padding-left: 10px;
  background: #222226;
  border-bottom: 1px solid #131315;
}

.insp-tab {
  flex: none;
  display: flex;
  flex-direction: column;
  align-items: center;
  padding-top: 8px;
  font-size: 9.800px;
  color: #808084;
}

.insp-tab svg { height: 15px; margin-bottom: 3px; color: #626266; }
.insp-tab.active { color: #ddd; border-bottom: 2px solid #c94f43; }
.insp-tab.active svg { color: #eee; }
.insp-tab.disabled, .insp-tab.disabled svg { color: #414146; }

.insp-body {
  flex: 1;
  display: flex;
  min-height: 0;
}

.groups {
  width: 342px;
  overflow: hidden;
}

.group {
  border-bottom: 1px solid #141417;
  border-top: 1px solid #2e2e34;
}

.group:nth-child(5) { border-bottom: 0; }

.group-head {
  height: 24px;
  display: flex;
  align-items: center;
  padding: 0 7px 0 12px;
  font-size: 10.900px;
  color: #d5d5d7;
}

.group-head svg { margin-left: auto; color: #707075; }
.group-head svg.faded { color: #48484d; }

.switch {
  width: 20px;
  height: 12px;
  margin-right: 8px;
  border-radius: 6px;
  background: radial-gradient(circle at 14px 6px, #e8503f 3.500px, transparent 4.300px), #19191b;
}

.switch.locked { background: radial-gradient(circle at 14px 6px, #79384a 3px, transparent 4px), #25252a; }
.switch.off { background: radial-gradient(circle at 6px 6px, #99999c 3px, transparent 4px), #19191b; }

.params { padding: 4px 0 3.500px; }

.param {
  height: 20.900px;
  display: flex;
  align-items: center;
  padding-right: 7px;
}

.param label {
  width: 108px;
  text-align: right;
  font-size: 9.500px;
  color: #aaaaad;
}

.slider {
  position: relative;
  width: 110px;
  height: 2px;
  margin-left: 9px;
  background: #19191c;
}

.slider i {
  position: absolute;
  top: -3px;
  width: 8px;
  height: 8px;
  margin-left: -4px;
  border-radius: 50%;
  background: #98989b;
}

.value {
  width: 46px;
  height: 18px;
  margin-left: 6px;
  line-height: 16px;
  text-align: center;
  border: 1px solid #111113;
  border-radius: 2px;
  background: #1c1c1e;
  color: #ccc;
  font-size: 10.300px;
}

.param svg { margin-left: auto; color: #707075; }

.eq {
  display: flex;
  padding-top: 17px;
}

.eq-scale {
  width: 28px;
  padding-right: 8px;
  font-size: 8px;
  line-height: 10px;
  letter-spacing: -0.3px;
  color: #707075;
  text-align: right;
}

.eq-scale span {
  display: block;
  height: 38.300px;
  margin-top: -5px;
  margin-bottom: 5px;
}

.eq-scale.right { padding: 0 0 0 7px; text-align: left; }

.insp-scroll {
  width: 9px;
  background: #242428;
  padding: 2px 1px 0 2px;
}

.insp-scroll i {
  display: block;
  height: 245px;
  border-radius: 3px;
  background: #535457;
}

/* Edit toolbar */
.edit-bar {
  height: 43px;
  flex: none;
  display: flex;
  align-items: center;
  background: #212126;
  border-top: 1px solid #0c0c0e;
  border-bottom: 1px solid #0c0c0e;
  color: #808084;
}

.view-options { margin: 0 284px 0 15px; }
.edit-bar > div { display: flex; align-items: center; }

.modes, .inserts, .links, .marks {
  height: 26px;
  border-right: 1px solid #333338;
}

.modes { width: 128px; }
.modes svg:nth-child(2) { margin-left: 16px; }
.modes svg:nth-child(3) { margin-left: 11px; }
.modes svg:nth-child(4) { margin-left: 12px; }
.inserts { width: 110px; padding-left: 9px; gap: 12px; }
.links { width: 109px; padding-left: 14px; gap: 17px; }
.links svg:nth-child(-n + 2) { color: #f2f2f2; }
.marks { width: 84px; padding-left: 11px; gap: 8px; }
.marks svg:nth-child(3) { margin-left: 2px; }
.zooms { padding-left: 8px; gap: 10px; }
.zooms svg:first-child { color: #b5b5b8; }
.zoom-minus { margin-left: 13px; }

.zoom-slider {
  width: 72px;
  height: 2px;
  margin-left: 14px;
  background: #151517;
}

.zoom-slider i {
  width: 8px;
  height: 8px;
  flex: none;
  margin-left: 38px;
  border-radius: 50%;
  background: #98989b;
}

.zoom-plus { margin-left: 11px; }
.speaker { margin-left: 157px; color: #ddd; }

.volume {
  width: 70px;
  height: 2px;
  margin-left: 9px;
  justify-content: flex-end;
  background: #27a346;
}

.volume i {
  width: 8px;
  height: 8px;
  flex: none;
  border-radius: 50%;
  background: #b5b5b8;
}

.edit-bar .dim {
  width: 20px;
  height: 11px;
  margin-left: 8px;
  justify-content: center;
  border-radius: 2px;
  background: #808084;
  color: #1c1c1f;
  font-size: 8px;
  font-weight: 700;
}

.meters { margin-left: 12px; }

/* Timeline */
.timeline {
  flex: 1;
  display: flex;
  min-height: 0;
  background: #28282e;
}

.track-heads {
  width: 194px;
  flex: none;
  background: #212126;
}

.timecode {
  height: 34px;
  line-height: 35px;
  text-align: center;
  font-size: 17.700px;
  color: #ddd;
  border-bottom: 1px solid #111113;
}

.head-gap { height: 140px; border-bottom: 1px solid #111113; }

.track-head {
  position: relative;
  border-left: 2px solid #4684b5;
  padding-left: 14px;
  background: linear-gradient(90deg, transparent 13px, #131315 13px, #131315 14px, transparent 14px);
}

.track-head.audio {
  height: 56px;
  border-left-color: #3c9f62;
  border-bottom: 1px solid #111113;
}

.track-head.video { height: 119px; }

.th-top {
  height: 22px;
  display: flex;
  align-items: center;
  padding-left: 6px;
  border-bottom: 1px solid #151517;
  color: #ddd;
  font-size: 10.700px;
}

.th-top span { padding-top: 1px; }

.th-top b {
  width: 27px;
  height: 17px;
  margin-right: 12px;
  line-height: 15px;
  text-align: center;
  font-size: 10px;
  font-weight: 400;
  color: #68686c;
  border: 1px solid #b3403c;
}

.th-top em {
  margin-left: auto;
  padding-right: 4px;
  font-size: 9px;
  color: #56565a;
}

.th-icons {
  height: 22px;
  display: flex;
  align-items: center;
  padding-left: 14px;
  color: #606064;
}

.audio .th-icons { height: 26px; }
.th-icons svg:nth-child(n + 2) { color: #ddd; }
.th-icons svg:nth-child(2) { margin: 0 12px 0 13px; }

.sm {
  width: 17px;
  height: 17px;
  margin-right: 9px;
  line-height: 15px;
  text-align: center;
  border: 1px solid #68686c;
  border-radius: 2px;
  font-size: 9.500px;
  color: #8a8a8d;
}

.audio .th-icons svg:nth-child(2) { margin-right: 10px; }

.clip-count {
  padding: 4px 0 0 12px;
  font-size: 10px;
  color: #46464b;
}

.split {
  height: 4px;
  background: linear-gradient(#0c0c0e 1px, #404043 1px, #404043 2px, #1d1d20 2px, #0c0c0e);
}

.tracks {
  position: relative;
  width: 1083px;
  flex: none;
  display: flex;
  flex-direction: column;
}

.ruler {
  position: relative;
  height: 34px;
  flex: none;
  border-bottom: 1px solid #222226;
}

.ruler-label {
  position: absolute;
  top: 10px;
  font-size: 8.900px;
  color: #808084;
}

.ruler-label.start { left: 5px; }
.ruler-label.two { left: 723px; }
.empty-lane { height: 140px; border-bottom: 1px solid #2f2f34; }
.video-lane { height: 119px; }

.audio-lane {
  padding: 0 0 0 2px;
  flex: 1;
}

.clip {
  position: relative;
  width: 1031px;
  height: 54px;
  border-radius: 2px;
  background: #469166;
}

.clip span {
  position: absolute;
  left: 2px;
  bottom: 1px;
  font-size: 9px;
  color: #d5ecdd;
}

.hscroll {
  height: 9px;
  flex: none;
  padding: 2px 0 1px 1px;
  background: #2d2f31;
}

.hscroll i {
  display: block;
  width: 542px;
  height: 6px;
  border-radius: 2px;
  background: #5c5d60;
}

.second-line {
  position: absolute;
  left: 718px;
  top: 34px;
  bottom: 9px;
  width: 1px;
  background: rgba(255, 255, 255, 0.07);
}

.playhead {
  position: absolute;
  left: 0;
  top: 1px;
  bottom: 9px;
  width: 1px;
  background: #d94b3b;
}

.playhead svg { margin-left: -6px; }

.vscroll {
  flex: 1;
  margin: 0 0 9px;
  border-left: 4px solid #1e1e21;
  background: #2d2f31;
}

/* Page tabs */
.pages {
  flex: 1;
  display: flex;
  background: #18191b;
  border-top: 1px solid #111113;
}

.brand {
  width: 367px;
  display: flex;
  align-items: center;
  gap: 7px;
  padding: 1px 0 0 37px;
  color: #ccc;
  font-size: 10.900px;
}

.page-tabs { display: flex; }

.page {
  width: 100.400px;
  display: flex;
  flex-direction: column;
  align-items: center;
  padding-top: 6px;
  color: #808083;
}

.page svg { height: 14px; margin-bottom: 2px; color: #707074; }

.page.active {
  background: #000;
  color: #eee;
  font-weight: 600;
  border-bottom: 2px solid #cd5145;
}

.footer-actions {
  margin-left: auto;
  display: flex;
  align-items: center;
  gap: 29px;
  padding: 1px 23px 0 0;
  color: #8a8a8d;
}
</style>
